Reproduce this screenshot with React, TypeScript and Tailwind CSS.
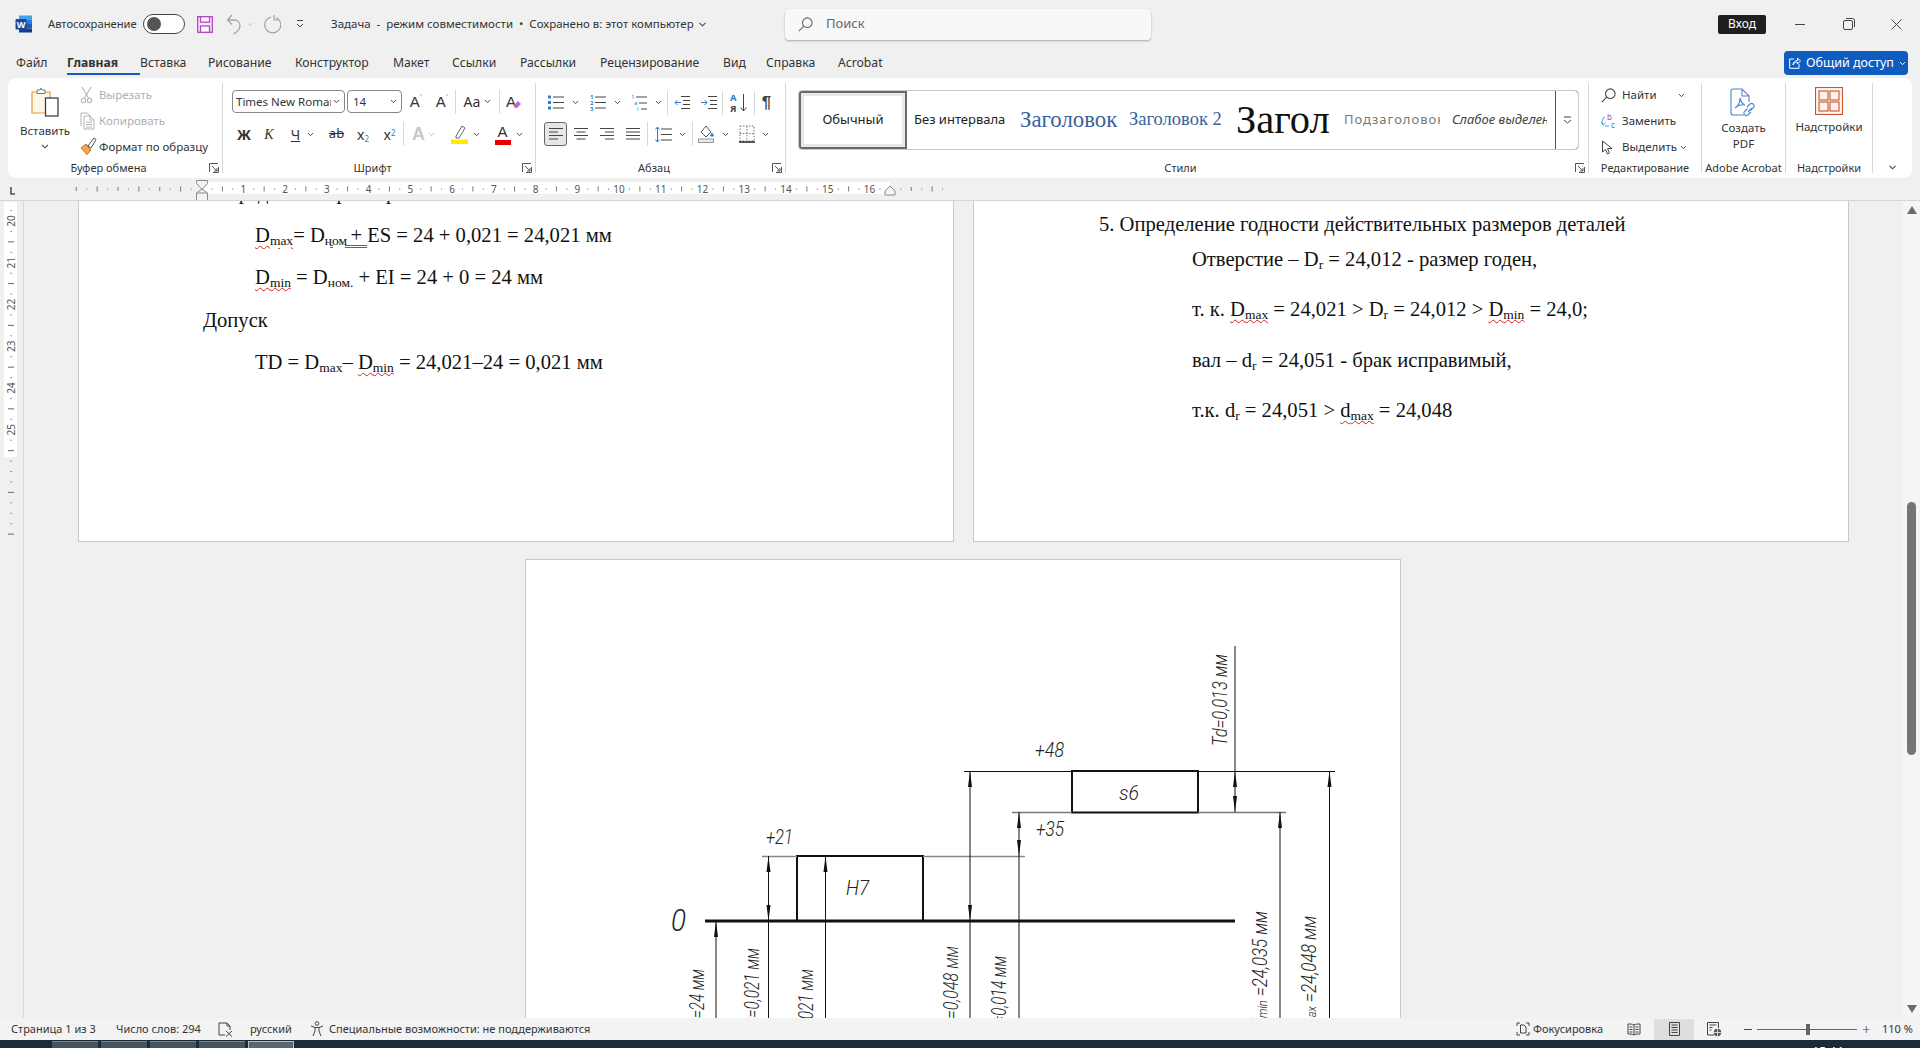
import React from "react";

const Caret = ({ c = "#444", w = 8 }: { c?: string; w?: number }) => (
  <svg width={w} height={5} viewBox="0 0 8 5" fill="none" stroke={c} strokeWidth="1.1"><path d="M1 .8 4 3.8 7 .8" /></svg>
);

const Launcher = () => (
  <svg width="10" height="10" viewBox="0 0 10 10" fill="none" stroke="#555" strokeWidth="1"><path d="M.5 9V.5H9M9.5 4v5.500H4M3 3l5 5M8 5v3H5" /></svg>
);

const WordIcon = () => (
  <svg width="18" height="18" viewBox="0 0 18 18">
    <rect x="4" y="0.5" width="13" height="4.5" fill="#41a5ee" />
    <rect x="4" y="5" width="13" height="4" fill="#2b7cd3" />
    <rect x="4" y="9" width="13" height="4.5" fill="#185abd" />
    <rect x="4" y="13.5" width="13" height="4" fill="#103f91" />
    <rect x="0.5" y="4" width="11" height="10.5" rx="1" fill="#134a9f" />
    <text x="6" y="12.5" textAnchor="middle" fontSize="9" fontWeight="700" fill="#fff">W</text>
  </svg>
);

const SaveIcon = () => (
  <svg width="16" height="17" viewBox="0 0 16 17" fill="none" stroke="#b146c2" strokeWidth="1.3">
    <rect x=".7" y=".7" width="14.6" height="15.6" fill="#f6e9f8" />
    <rect x="3.5" y=".7" width="9" height="5.5" fill="#fff" />
    <rect x="3.5" y="10" width="9" height="6.3" fill="#fff" />
  </svg>
);

const UndoIcon = () => (
  <svg width="16" height="21" viewBox="0 0 16 21" fill="none" stroke="#a3a3a3" strokeWidth="1.3"><path d="M6 1 1.500 6 6 10.500M1.500 6H8c3.500 0 6 2.500 6 6 0 3.500-3 6-6.500 8" /></svg>
);

const RedoIcon = () => (
  <svg width="18" height="20" viewBox="0 0 18 20" fill="none" stroke="#a3a3a3" strokeWidth="1.2"><path d="M11 1v5h5M13 3.500A8 8 0 1 1 8 3" /></svg>
);

const SearchIcon = ({ s = 15, c = "#666" }: { s?: number; c?: string }) => (
  <svg width={s} height={s} viewBox="0 0 15 15" fill="none" stroke={c} strokeWidth="1.1"><circle cx="9.300" cy="5.700" r="4.800" /><path d="M5.800 9.200.8 14.200" /></svg>
);

const Paste = () => (
  <svg width="28" height="30" viewBox="0 0 28 30" fill="none">
    <path d="M1 5h18v21H1z" fill="#fdf6ea" stroke="#e29a3c" strokeWidth="1.2" />
    <path d="M6 5V3h3l1-2 1 2h3v3.500H6z" fill="#fff" stroke="#777" strokeWidth="1" />
    <rect x="14.500" y="11" width="12.500" height="18" fill="#fff" stroke="#333" strokeWidth="1.2" />
  </svg>
);

const Scissors = () => (
  <svg width="13" height="18" viewBox="0 0 13 18" fill="none" stroke="#b5b5b5" strokeWidth="1.1"><path d="M2 1l6.500 11M11 1 4.500 12" /><circle cx="3.500" cy="14.500" r="2.200" /><circle cx="9.500" cy="14.500" r="2.200" /></svg>
);

const CopyI = () => (
  <svg width="15" height="18" viewBox="0 0 15 18" fill="none" stroke="#b5b5b5" strokeWidth="1"><path d="M1 14V1h6l3 3" /><path d="M4 4h6l4 4v9H4zM10 4v4h4M6 10h6M6 12.500h6M6 15h6" /></svg>
);

const Brush = () => (
  <svg width="17" height="18" viewBox="0 0 17 18" fill="none">
    <path d="M1 11l5-4 5 6-4 4.500z" fill="#f4a64a" stroke="#d2691e" />
    <path d="M6 7l3 4" stroke="#777" />
    <path d="M8 9l6-8 2 1.500-5 8.500z" fill="#fff" stroke="#555" />
  </svg>
);

const BigA = ({ c = "#333" }: { c?: string }) => (
  <span className="font-['Liberation_Sans',sans-serif] text-[15px] leading-none" style={{ color: c }}>A</span>
);

const Lines = ({ kind }: { kind: "l" | "c" | "r" | "j" }) => {
  const d = {
    l: "M1 1.500h14M1 5h9M1 8.500h14M1 12h9",
    c: "M1 1.500h14M3.500 5h9M1 8.500h14M3.500 12h9",
    r: "M1 1.500h14M6 5h9M1 8.500h14M6 12h9",
    j: "M1 1.500h14M1 5h14M1 8.500h14M1 12h14",
  }[kind];
  return <svg width="16" height="14" viewBox="0 0 16 14" fill="none" stroke="#444" strokeWidth="1"><path d={d} /></svg>;
};

const ListI = ({ kind }: { kind: "b" | "n" | "m" }) => (
  <svg width="17" height="17" viewBox="0 0 17 17" fill="none" strokeWidth="1">
    {kind === "b" && <g fill="#2b7cd3"><rect x="0" y="1.500" width="3" height="3" /><rect x="0" y="7" width="3" height="3" /><rect x="0" y="12.500" width="3" height="3" /></g>}
    {kind === "n" && <g fill="#2b7cd3" fontSize="6" fontWeight="700"><text x="0" y="5">1</text><text x="0" y="11">2</text><text x="0" y="17">3</text></g>}
    {kind === "m" && <g fill="#2b7cd3" fontSize="6"><text x="0" y="5">1</text><text x="3" y="11">a</text><text x="6" y="17">i</text></g>}
    <path d={kind === "m" ? "M5 3h11M8 9h8M10 15h6" : "M5 3h11M5 8.500h11M5 14h11"} stroke="#444" />
  </svg>
);

const Indent = ({ dir }: { dir: "l" | "r" }) => (
  <svg width="16" height="15" viewBox="0 0 16 15" fill="none" strokeWidth="1">
    <path d="M7 1.500h9M9 5.500h7M9 9.500h7M7 13.500h9" stroke="#444" />
    <path d={dir === "l" ? "M7 7.500H1M3.500 5 1 7.500 3.500 10" : "M0 7.500h6M3.500 5 6 7.500 3.500 10"} stroke="#2b7cd3" />
  </svg>
);

const Sort = () => (
  <svg width="18" height="20" viewBox="0 0 18 20" fill="none">
    <text x="0" y="8" fontSize="9.500" fontWeight="700" fill="#2b7cd3">А</text>
    <text x="0" y="18.500" fontSize="9.500" fontWeight="700" fill="#444">Я</text>
    <path d="M13.500 1v17M10.500 14.500l3 3.500 3-3.500" stroke="#444" />
  </svg>
);

const Spacing = () => (
  <svg width="17" height="17" viewBox="0 0 17 17" fill="none" strokeWidth="1">
    <path d="M6 3h11M6 8.500h11M6 14h11" stroke="#444" />
    <path d="M2.500 1v15M.5 3.500l2-2.500 2 2.500M.5 13.500l2 2.500 2-2.500" stroke="#2b7cd3" />
  </svg>
);

const Shade = () => (
  <svg width="17" height="18" viewBox="0 0 17 18" fill="none" strokeWidth="1">
    <path d="M8 1 3 7l5 5 5-5z" stroke="#555" />
    <path d="M14 8l1.500 3h-3z" fill="#2b7cd3" stroke="#2b7cd3" />
    <rect x=".5" y="14" width="15" height="3.500" fill="#e9e9e9" stroke="#999" />
  </svg>
);

const Borders = () => (
  <svg width="16" height="18" viewBox="0 0 16 18" fill="none" stroke="#777" strokeWidth="1" strokeDasharray="1.500 1.500">
    <path d="M1 1h14v15H1zM8 1v15M1 8.500h14" />
    <path d="M0 17h16" stroke="#222" strokeWidth="1.500" strokeDasharray="none" />
  </svg>
);

const Sep = ({ h = "h-[24px]" }: { h?: string }) => <div className={`w-px bg-[#d8d8d8] shrink-0 ${h}`} />;

const Cell = ({ w, children, gap = "gap-[7px]" }: { w: string; children: React.ReactNode; gap?: string }) => (
  <div className={`flex items-center justify-center shrink-0 h-full ${w} ${gap}`}>{children}</div>
);

const Group = ({ w, label, launcher, children }: { w: string; label: string; launcher?: boolean; children: React.ReactNode }) => (
  <div className={`flex flex-col shrink-0 h-full border-r border-[#d8d8d8] ${w}`}>
    <div className="flex-1 min-h-0">{children}</div>
    <div className={`flex items-center h-[14px] pt-[3px] text-[11px] leading-none text-[#333] ${launcher ? "pr-[3px]" : ""}`}>
      <span className="flex-1 text-center whitespace-nowrap">{label}</span>
      {launcher && <Launcher />}
    </div>
  </div>
);

const Wavy = ({ children }: { children: React.ReactNode }) => (
  <span className="underline decoration-wavy decoration-[#d02020] decoration-1 underline-offset-[3px]">{children}</span>
);

const Sb = ({ children }: { children: React.ReactNode }) => <sub className="text-[13.500px]">{children}</sub>;

const Line = ({ pl, mt, children }: { pl: string; mt?: string; children: React.ReactNode }) => (
  <p className={`whitespace-nowrap ${pl} ${mt ?? ""}`}>{children}</p>
);

const HRuler = () => {
  const nums = Array.from({ length: 17 }, (_, i) => i);
  const x = (i: number) => 201.5 + i * 41.75;
  const ticks: React.ReactNode[] = [];
  for (let i = -3; i < 18; i++) {
    for (const q of [0.25, 0.5, 0.75]) {
      const px = x(i + q);
      if (px < 75 || px > 945) continue;
      ticks.push(q === 0.5
        ? <path key={`${i}${q}`} d={`M${px} 6.500v5`} stroke="#777" />
        : <path key={`${i}${q}`} d={`M${px} 8.500v1.200`} stroke="#777" />);
    }
    if (i < 0) ticks.push(<path key={`n${i}`} d={`M${x(i)} 7v4`} stroke="#777" />);
    if (i > 16 && x(i) < 945) ticks.push(<path key={`m${i}`} d={`M${x(i)} 7v4`} stroke="#777" />);
  }
  return (
    <svg width="1920" height="21" viewBox="0 0 1920 21" className="block" fill="none">
      <rect x="204" y="2" width="686" height="12" fill="#fff" />
      {ticks}
      {nums.slice(1).map((n) => (
        <text key={n} x={x(n)} y="12.500" textAnchor="middle" fontSize="10" fill="#555" stroke="none">{n}</text>
      ))}
      <path d="M11 7v7h4" stroke="#555" strokeWidth="1.600" />
      <path d="M196.500.5h11v3l-5.500 6-5.500-6zM196.500 20.500h11V13h-11zM196.500 13l5.500-4 5.500 4" stroke="#8a8a8a" fill="#f4f4f4" />
      <path d="M885 15v-4l5-5 5 5v4z" stroke="#8a8a8a" fill="#f4f4f4" />
    </svg>
  );
};

const VRuler = () => {
  const y = (n: number) => 20 + (n - 20) * 41.75;
  const out: React.ReactNode[] = [];
  for (let n = 19; n < 28; n++) {
    for (const q of [0.25, 0.5, 0.75]) {
      const py = y(n + q);
      if (py < 4 || py > 340) continue;
      out.push(q === 0.5
        ? <path key={`${n}${q}`} d={`M8 ${py}h6`} stroke="#666" />
        : <path key={`${n}${q}`} d={`M10.500 ${py}h1.300`} stroke="#666" />);
    }
    if (n > 25) out.push(<path key={`t${n}`} d={`M10.500 ${y(n)}h1.300`} stroke="#666" />);
  }
  return (
    <svg width="23" height="340" viewBox="0 0 23 340" fill="none" className="block shrink-0">
      <rect x="4" y="1" width="13" height="255" fill="#fff" />
      {out}
      {[20, 21, 22, 23, 24, 25].map((n) => (
        <text key={n} transform={`translate(14.500 ${y(n)}) rotate(-90)`} textAnchor="middle" fontSize="10" fill="#555">{n}</text>
      ))}
    </svg>
  );
};

const Arr = ({ x, y, up }: { x: number; y: number; up: boolean }) => (
  <path d={up ? `M${x} ${y}l-2 16h4z` : `M${x} ${y}l-2-16h4z`} fill="#111" stroke="none" />
);

const VT = ({ x, y, len, children }: { x: number; y: number; len: number; children: React.ReactNode }) => (
  <text transform={`translate(${x} ${y}) rotate(-90)`} textAnchor="end" fontSize="20" textLength={len} lengthAdjust="spacingAndGlyphs">{children}</text>
);

const Drawing = () => (
  <svg width="874" height="500" viewBox="526 559 874 500" fill="none" className="block font-['Roboto',sans-serif] italic font-light">
    <g stroke="#111" strokeWidth="1">
      <path d="M705 920H1235" strokeWidth="3" />
      <path d="M797 920V855H923V920" strokeWidth="2" />
      <path d="M1072 811.500V770H1198V811.500H1072Z" strokeWidth="2" />
      <path d="M762 855.500H797M923 855.500H1025" stroke="#888" strokeWidth="1.500" />
      <path d="M964 770.500H1072M1198 770.500H1335" strokeWidth="1.200" />
      <path d="M1012 811.500H1072M1198 811.500H1286" stroke="#777" strokeWidth="1.500" />
      <path d="M716 920V1060M768.500 855V1060M825.500 855V1060M970 770V1060M1019 811V1060M1235 645V811M1280 811V1060M1329.500 770V1060" />
    </g>
    <Arr x={716} y={920} up />
    <Arr x={768.500} y={855} up />
    <Arr x={768.500} y={920} up={false} />
    <Arr x={825.500} y={855} up />
    <Arr x={970} y={770} up />
    <Arr x={970} y={920} up={false} />
    <Arr x={1019} y={811} up />
    <Arr x={1019} y={855} up={false} />
    <Arr x={1235} y={770} up />
    <Arr x={1235} y={811} up={false} />
    <Arr x={1280} y={811} up />
    <Arr x={1329.500} y={770} up />
    <g fill="#222" fontSize="20">
      <text x="1035" y="756" textLength="29" lengthAdjust="spacingAndGlyphs">+48</text>
      <text x="1036" y="835" textLength="28" lengthAdjust="spacingAndGlyphs">+35</text>
      <text x="766" y="843" textLength="27" lengthAdjust="spacingAndGlyphs">+21</text>
      <text x="846" y="894" textLength="23" lengthAdjust="spacingAndGlyphs">H7</text>
      <text x="1119" y="799" textLength="20" lengthAdjust="spacingAndGlyphs">s6</text>
      <text x="671" y="930" fontSize="32" textLength="15" lengthAdjust="spacingAndGlyphs">0</text>
      <VT x={1227} y={653} len={92}>Td=0,013 мм</VT>
      <VT x={704} y={968} len={83}>Dmin=24 мм</VT>
      <VT x={759} y={947} len={87}>ES=0,021 мм</VT>
      <VT x={813} y={968} len={116}>Dmax=24,021 мм</VT>
      <VT x={958} y={945} len={89}>es=0,048 мм</VT>
      <VT x={1006} y={955} len={102}>Nmin=0,014 мм</VT>
      <VT x={1267} y={910} len={116}>d<tspan fontSize="13">min</tspan> =24,035 мм</VT>
      <VT x={1316} y={915} len={120}>d<tspan fontSize="13">max</tspan> =24,048 мм</VT>
    </g>
  </svg>
);

export default function App() {
  return (
    <div className="w-[1920px] h-[1048px] overflow-hidden flex flex-col bg-[#f0f0f0] text-[#333] font-['Noto_Sans',sans-serif]">
      {/* Title bar */}
      <header className="h-[46px] shrink-0 flex items-center text-[11.500px] pl-[15px] pt-[2px]">
        <WordIcon />
        <span className="ml-[15px] w-[90px] text-[11.200px] whitespace-nowrap">Автосохранение</span>
        <div className="ml-[5px] w-[42px] h-[20px] rounded-full border border-[#444] bg-white flex items-center pl-[3px]">
          <div className="w-[14px] h-[14px] rounded-full bg-[#555]" />
        </div>
        <div className="ml-[12px]"><SaveIcon /></div>
        <div className="ml-[13px] flex items-center gap-[5px]"><UndoIcon /><Caret c="#b5b5b5" w={6} /></div>
        <div className="ml-[10px]"><RedoIcon /></div>
        <svg className="ml-[14px]" width="10" height="10" viewBox="0 0 10 10" fill="none" stroke="#444" strokeWidth="1"><path d="M2 1.500h6M2 5l3 3 3-3" /></svg>
        <span className="ml-[26px] w-[366px] whitespace-pre">Задача  -  режим совместимости  •  Сохранено в: этот компьютер</span>
        <Caret c="#444" w={11} />
        <div className="ml-[77px] w-[366px] h-[31px] bg-[#f8f8f8] rounded-[4px] shadow-[0_1px_2px_rgba(0,0,0,0.3)] flex items-center pl-[13px] text-[#666] text-[13px]">
          <SearchIcon />
          <span className="ml-[13px]">Поиск</span>
        </div>
        <div className="ml-[567px] w-[48px] h-[19px] rounded-[2px] bg-[#1f1f1f] text-white text-[12px] flex items-center justify-center">Вход</div>
        <div className="ml-[29px] w-[10px] h-px bg-[#444]" />
        <svg className="ml-[38px]" width="12" height="12" viewBox="0 0 12 12" fill="none" stroke="#444" strokeWidth="1"><rect x=".5" y="2.500" width="9" height="9" rx="1.500" /><path d="M3 .5h6.500a2 2 0 0 1 2 2V9" /></svg>
        <svg className="ml-[36px]" width="11" height="11" viewBox="0 0 11 11" fill="none" stroke="#444" strokeWidth="1"><path d="M.5.5l10 10M10.500.5l-10 10" /></svg>
      </header>

      {/* Tabs */}
      <nav className="h-[32px] shrink-0 flex items-start text-[12.200px] leading-[18px] pl-[16px] pt-[8px]">
        <span className="w-[51px]">Файл</span>
        <span className="w-[73px] font-bold border-b-2 border-[#185abd] h-[21px] mr-0">Главная</span>
        <span className="w-[68px]">Вставка</span>
        <span className="w-[87px]">Рисование</span>
        <span className="w-[98px]">Конструктор</span>
        <span className="w-[59px]">Макет</span>
        <span className="w-[68px]">Ссылки</span>
        <span className="w-[80px]">Рассылки</span>
        <span className="w-[123px]">Рецензирование</span>
        <span className="w-[43px]">Вид</span>
        <span className="w-[72px]">Справка</span>
        <span className="w-[60px]">Acrobat</span>
        <div className="ml-[886px] -mt-[3px] w-[124px] h-[24px] rounded-[4px] bg-[#0f5cc0] text-white flex items-center pl-[5px] gap-[5px] text-[12.500px]">
          <svg width="12" height="12" viewBox="0 0 12 12" fill="none" stroke="#fff" strokeWidth="1"><path d="M5 2H.7v9.300H10V7M4 8c0-3 2-4.500 4.500-4.500V1l3 3-3 3V5C6.500 5 5 6 4 8z" /></svg>
          <span className="whitespace-nowrap">Общий доступ</span>
          <Caret c="#fff" w={7} />
        </div>
      </nav>

      {/* Ribbon */}
      <section className="mx-[8px] h-[100px] shrink-0 bg-white rounded-[8px] py-[5px] flex text-[11.500px]">
        <Group w="w-[215px]" label="Буфер обмена" launcher>
          <div className="flex h-full">
            <div className="ml-[12px] w-[50px] flex flex-col items-center pt-[4px]">
              <Paste />
              <span className="mt-[5px]">Вставить</span>
              <div className="mt-[5px]"><Caret /></div>
            </div>
            <div className="ml-[10px] flex flex-col -mt-px">
              <div className="h-[26px] flex items-center text-[#b0b0b0]"><div className="w-[19px]"><Scissors /></div>Вырезать</div>
              <div className="h-[26px] flex items-center text-[#b0b0b0]"><div className="w-[19px]"><CopyI /></div>Копировать</div>
              <div className="h-[26px] flex items-center whitespace-nowrap"><div className="w-[19px]"><Brush /></div>Формат по образцу</div>
            </div>
          </div>
        </Group>

        <Group w="w-[313px]" label="Шрифт" launcher>
          <div className="pl-[9px] pt-[7px]">
            <div className="flex items-center h-[23px]">
              <div className="w-[113px] h-[23px] border border-[#888] rounded-[4px] flex items-center pl-[3px] pr-[4px] gap-[2px] text-[11.500px]">
                <span className="flex-1 overflow-hidden whitespace-nowrap">Times New Roman</span><Caret w={7} />
              </div>
              <div className="ml-[2px] w-[55px] h-[23px] border border-[#888] rounded-[4px] flex items-center justify-between pl-[5px] pr-[4px]">
                <span>14</span><Caret w={7} />
              </div>
              <Cell w="w-[26px] ml-[1px]"><span className="flex items-start"><BigA /><span className="text-[8px] leading-none text-[#2b7cd3]">˄</span></span></Cell>
              <Cell w="w-[26px]"><span className="flex items-start"><BigA /><span className="text-[8px] leading-none text-[#2b7cd3]">˅</span></span></Cell>
              <Sep />
              <Cell w="w-[43px]" gap="gap-[4px]"><span className="text-[14px]">Aa</span><Caret w={7} /></Cell>
              <Sep />
              <Cell w="w-[28px]">
                <span className="flex items-end"><BigA /><svg width="9" height="9" viewBox="0 0 9 9" className="-ml-[3px]"><path d="M1 5l4-4 3 3-4 4H2z" fill="#c266d6" /></svg></span>
              </Cell>
            </div>
            <div className="flex items-center h-[24px] mt-[9px]">
              <Cell w="w-[24px]"><span className="font-bold text-[14px] text-[#333]">Ж</span></Cell>
              <Cell w="w-[26px]"><span className="italic text-[14px] font-['Liberation_Serif',serif]">К</span></Cell>
              <Cell w="w-[41px]"><span className="underline text-[14px]">Ч</span><Caret w={7} /></Cell>
              <Cell w="w-[27px]"><span className="line-through text-[13px]">ab</span></Cell>
              <Cell w="w-[26px]"><span className="text-[14px]">x<sub className="text-[#2b7cd3] text-[8px]">2</sub></span></Cell>
              <Cell w="w-[27px]"><span className="text-[14px]">x<sup className="text-[#2b7cd3] text-[8px]">2</sup></span></Cell>
              <Sep />
              <Cell w="w-[39px]" gap="gap-[3px]"><span className="font-bold text-[18px] leading-none text-[#c8c8c8] font-['Liberation_Sans',sans-serif]">A</span><Caret c="#c0c0c0" w={7} /></Cell>
              <Cell w="w-[44px]" gap="gap-[5px]">
                <svg width="17" height="20" viewBox="0 0 17 20" fill="none"><path d="M5 12 11 2l3 2-6 10H5z" stroke="#666" /><rect y="15.500" width="17" height="4.500" fill="#ffeb00" /></svg>
                <Caret w={7} />
              </Cell>
              <Cell w="w-[43px]" gap="gap-[5px]">
                <span className="flex flex-col items-center leading-none"><BigA /><span className="block w-[16px] h-[5px] bg-[#e60000] mt-[1px]" /></span>
                <Caret w={7} />
              </Cell>
            </div>
          </div>
        </Group>

        <Group w="w-[250px]" label="Абзац" launcher>
          <div className="pt-[8px]">
            <div className="flex items-center h-[23px] pl-[6px]">
              <Cell w="w-[42px]"><ListI kind="b" /><Caret w={7} /></Cell>
              <Cell w="w-[42px]"><ListI kind="n" /><Caret w={7} /></Cell>
              <Cell w="w-[41px]"><ListI kind="m" /><Caret w={7} /></Cell>
              <Sep />
              <Cell w="w-[27px]"><Indent dir="l" /></Cell>
              <Cell w="w-[27px]"><Indent dir="r" /></Cell>
              <Sep />
              <Cell w="w-[31px]"><Sort /></Cell>
              <Sep />
              <Cell w="w-[23px]"><span className="font-['Liberation_Sans',sans-serif] text-[17px] font-bold text-[#444]">¶</span></Cell>
            </div>
            <div className="flex items-center h-[24px] mt-[8px] pl-[8px]">
              <div className="w-[23px] h-[24px] rounded-[3px] border border-[#666] bg-[#e6e6e6] flex items-center justify-center"><Lines kind="l" /></div>
              <Cell w="w-[27px]"><Lines kind="c" /></Cell>
              <Cell w="w-[25px]"><Lines kind="r" /></Cell>
              <Cell w="w-[28px]"><Lines kind="j" /></Cell>
              <Sep />
              <Cell w="w-[44px]"><Spacing /><Caret w={7} /></Cell>
              <Sep />
              <Cell w="w-[41px]"><Shade /><Caret w={7} /></Cell>
              <Cell w="w-[40px]"><Borders /><Caret w={7} /></Cell>
            </div>
          </div>
        </Group>

        <Group w="w-[803px]" label="Стили" launcher>
          <div className="pt-[7px] pl-[12px]">
            <div className="w-[781px] h-[60px] border border-[#c8c8c8] rounded-[4px] flex items-center overflow-hidden">
              <div className="w-[108px] h-[58px] border-2 border-[#6a6a6a] outline-none flex items-center justify-center shrink-0 bg-white text-[13px] text-[#222] shadow-[inset_0_0_0_3px_#e8e8e8]">Обычный</div>
              <span className="ml-[7px] w-[106px] shrink-0 text-[13px] text-[#222] whitespace-nowrap">Без интервала</span>
              <span className="w-[109px] shrink-0 text-[22.800px] text-[#3a6298] font-['Liberation_Serif',serif] whitespace-nowrap">Заголовок</span>
              <span className="w-[107px] shrink-0 text-[18.500px] text-[#3a6298] font-['Liberation_Serif',serif] whitespace-nowrap">Заголовок 2</span>
              <span className="w-[108px] shrink-0 text-[40.500px] leading-none text-[#111] font-['Liberation_Serif',serif] whitespace-nowrap">Загол</span>
              <span className="w-[96px] mr-[12px] shrink-0 overflow-hidden text-[13px] text-[#777] tracking-[1px] whitespace-nowrap">Подзаголовок</span>
              <span className="w-[95px] shrink-0 overflow-hidden text-[13px] italic text-[#444] whitespace-nowrap">Слабое выделение</span>
              <div className="ml-[8px] w-[24px] h-[60px] border border-[#555] rounded-r-[4px] flex items-center justify-center shrink-0">
                <svg width="9" height="8" viewBox="0 0 9 8" fill="none" stroke="#444"><path d="M1 1h7M1 4l3.500 3L8 4" /></svg>
              </div>
            </div>
          </div>
        </Group>

        <Group w="w-[113px]" label="Редактирование">
          <div className="flex flex-col pl-[12px] -mt-px">
            <div className="h-[26px] flex items-center"><div className="w-[21px]"><SearchIcon s={15} c="#444" /></div>Найти<div className="ml-[21px]"><Caret w={7} /></div></div>
            <div className="h-[26px] flex items-center">
              <div className="w-[21px]">
                <svg width="16" height="15" viewBox="0 0 16 15" fill="none">
                  <path d="M4 3C1 4 .5 8 2 11M0.500 8l1.500 3 2.500-2M4 12h4" stroke="#2b9cd8" />
                  <text x="6" y="6" fontSize="8" fill="#b146c2">b</text>
                  <text x="10" y="14" fontSize="8" fill="#2b7cd3">c</text>
                </svg>
              </div>Заменить
            </div>
            <div className="h-[26px] flex items-center">
              <div className="w-[21px]"><svg width="12" height="15" viewBox="0 0 12 15" fill="none" stroke="#444"><path d="M1.500 1v11l3-2.500 2 4.500 2-1-2-4.500H11z" /></svg></div>Выделить<div className="ml-[3px]"><Caret w={7} /></div>
            </div>
          </div>
        </Group>

        <Group w="w-[84px]" label="Adobe Acrobat">
          <div className="flex flex-col items-center pt-[5px] leading-[16px]">
            <svg width="27" height="29" viewBox="0 0 27 29" fill="none" stroke="#4a86d0" strokeWidth="1.100">
              <path d="M14 27H3a2 2 0 0 1-2-2V3a2 2 0 0 1 2-2h9l7 7v6M12 1v7h7" />
              <path d="M5 20c3-2 5-6 5-10 1 4 2 6 5 7-3-.5-7 0-10 3z" />
              <path d="M17 19l3-3a2.500 2.500 0 0 1 3.500 3.500l-3 3M21 24l-3 3a2.500 2.500 0 0 1-3.500-3.500l3-3M18 24l4-4" />
            </svg>
            <span className="mt-[3px]">Создать</span>
            <span>PDF</span>
          </div>
        </Group>

        <Group w="w-[87px]" label="Надстройки">
          <div className="flex flex-col items-center pt-[4px]">
            <svg width="28" height="28" viewBox="0 0 28 28" fill="#fdf3ee" stroke="#c5562a" strokeWidth="1.100">
              <rect x=".5" y=".5" width="27" height="27" />
              <rect x="4" y="4" width="9" height="9" />
              <rect x="15" y="4" width="9" height="9" />
              <rect x="4" y="15" width="9" height="9" />
              <rect x="15" y="15" width="9" height="9" />
            </svg>
            <span className="mt-[3px]">Надстройки</span>
          </div>
        </Group>

        <div className="flex-1 flex items-end justify-center pb-[3px]"><Caret c="#444" w={11} /></div>
      </section>

      {/* Ruler */}
      <div className="mt-[2px] h-[21px] shrink-0 border-b border-[#d4d4d4] overflow-hidden"><HRuler /></div>

      {/* Document */}
      <main className="flex-1 min-h-0 flex">
        <div className="w-[24px] shrink-0 border-r border-[#d8d8d8]"><VRuler /></div>
        <div className="flex-1 min-w-0 overflow-hidden font-['Liberation_Serif',serif] text-[20.600px] text-[#111] pl-[54px]">
          <div className="flex gap-[19px]">
            <article className="w-[876px] h-[341px] bg-white border-x border-b border-[#c8c8c8] overflow-hidden leading-[42.500px]">
              <div className="-mt-[30px]">
                <Line pl="pl-[145px]">Предельные размеры</Line>
                <Line pl="pl-[176px]"><Wavy>D<Sb>max</Sb></Wavy>= D<span className="underline decoration-double decoration-[#2b6cc4] decoration-1 underline-offset-[3px]"><Sb>ном </Sb>+ </span>ES = 24 + 0,021 = 24,021 мм</Line>
                <Line pl="pl-[176px]"><Wavy>D<Sb>min</Sb></Wavy> = D<Sb>ном.</Sb> + EI = 24 + 0 = 24 мм</Line>
                <Line pl="pl-[124px]">Допуск</Line>
                <Line pl="pl-[176px]">TD = D<Sb>max</Sb>– <Wavy>D<Sb>min</Sb></Wavy> = 24,021–24 = 0,021 мм</Line>
              </div>
            </article>
            <article className="w-[876px] h-[341px] bg-white border-x border-b border-[#c8c8c8] overflow-hidden leading-[30px]">
              <Line pl="pl-[125px]" mt="mt-[8px]">5. Определение годности действительных размеров деталей</Line>
              <Line pl="pl-[218px]" mt="mt-[5px]">Отверстие – D<Sb>r</Sb> = 24,012 - размер годен,</Line>
              <Line pl="pl-[218px]" mt="mt-[20px]">т. к. <Wavy>D<Sb>max</Sb></Wavy> = 24,021 &gt; D<Sb>r</Sb> = 24,012 &gt; <Wavy>D<Sb>min</Sb></Wavy> = 24,0;</Line>
              <Line pl="pl-[218px]" mt="mt-[21px]">вал – d<Sb>r</Sb> = 24,051 - брак исправимый,</Line>
              <Line pl="pl-[218px]" mt="mt-[20px]">т.к. d<Sb>r</Sb> = 24,051 &gt; <Wavy>d<Sb>max</Sb></Wavy> = 24,048</Line>
            </article>
          </div>
          <article className="mt-[17px] ml-[447px] w-[876px] h-[600px] bg-white border border-[#c8c8c8]"><Drawing /></article>
        </div>
        <aside className="w-[17px] shrink-0 flex flex-col items-center pt-[5px] bg-[#f5f5f5]">
          <svg width="10" height="8" viewBox="0 0 10 8"><path d="M5 0l5 8H0z" fill="#6a6a6a" /></svg>
          <div className="mt-[288px] w-[9px] h-[253px] bg-[#757575] rounded-full" />
          <div className="flex-1" />
          <svg width="10" height="8" viewBox="0 0 10 8" className="mb-[5px]"><path d="M5 8l5-8H0z" fill="#6a6a6a" /></svg>
        </aside>
      </main>

      {/* Status bar */}
      <footer className="h-[22px] shrink-0 bg-[#f3f3f3] flex items-center text-[11px] text-[#333] pl-[11px]">
        <span className="w-[105px] whitespace-nowrap">Страница 1 из 3</span>
        <span className="w-[102px] whitespace-nowrap">Число слов: 294</span>
        <svg width="15" height="15" viewBox="0 0 15 15" fill="none" stroke="#444"><path d="M9 1H1v12h6M9 1l3 3v4M9 1v3h3M8 9l6 5.500M14 9l-6 5.500" /></svg>
        <span className="ml-[17px] w-[60px] whitespace-nowrap">русский</span>
        <svg width="16" height="16" viewBox="0 0 16 16" fill="none" stroke="#444"><circle cx="7" cy="2.500" r="1.800" /><path d="M1 5l4 1.500h4L13 5M5 6.500V10l-2 5M9 6.500V10l2 5" /></svg>
        <span className="ml-[3px] whitespace-nowrap">Специальные возможности: не поддерживаются</span>
        <div className="flex-1" />
        <svg width="14" height="14" viewBox="0 0 14 14" fill="none" stroke="#444"><path d="M1 4V1h3M10 1h3v3M13 10v3h-3M4 13H1v-3M4.500 3h3.500l2 2v6h-5.500z" /></svg>
        <span className="ml-[3px] w-[94px] whitespace-nowrap">Фокусировка</span>
        <svg width="14" height="13" viewBox="0 0 14 13" fill="none" stroke="#444"><path d="M7 2C5.500 1 3 1 1 1v10c2 0 4.500 0 6 1 1.500-1 4-1 6-1V1c-2 0-4.500 0-6 1zM7 2v10M2.500 4h3M2.500 6.500h3M2.500 9h3M8.500 4h3M8.500 6.500h3M8.500 9h3" /></svg>
        <div className="ml-[13px] w-[40px] h-[21px] bg-[#dedede] flex items-center justify-center">
          <svg width="11" height="14" viewBox="0 0 11 14" fill="none" stroke="#444"><path d="M.5.5h10v13H.5zM2.500 3h6M2.500 5.500h6M2.500 8h6M2.500 10.500h6" /></svg>
        </div>
        <svg className="ml-[13px]" width="15" height="15" viewBox="0 0 15 15" fill="none" stroke="#444"><path d="M7 13H.5V.5h11V6M2.500 3h7M2.500 5.500h3M2.500 8h2" /><circle cx="10.500" cy="10.500" r="3.700" fill="#555" stroke="none" /><path d="M7 10.500h7M10.500 7v7" stroke="#f3f3f3" strokeWidth=".8" /></svg>
        <div className="ml-[22px] w-[8px] h-px bg-[#444]" />
        <div className="ml-[5px] w-[100px] h-[13px] flex items-center">
          <div className="w-[49px] h-px bg-[#666]" />
          <div className="w-[4px] h-[11px] bg-[#666]" />
          <div className="flex-1 h-px bg-[#666]" />
        </div>
        <span className="ml-[5px] text-[15px] leading-none w-[17px] text-[#444] font-light">+</span>
        <span className="ml-[3px] w-[38px] whitespace-nowrap">110 %</span>
      </footer>

      {/* Taskbar */}
      <div className="h-[8px] shrink-0 bg-[#1b2b38] flex items-start pl-[52px] pt-px gap-[3px] overflow-hidden">
        <div className="w-[46px] h-[7px] bg-[#46525c] border-t border-[#7b858c]" />
        <div className="w-[46px] h-[7px] bg-[#46525c] border-t border-[#7b858c]" />
        <div className="w-[46px] h-[7px] bg-[#46525c] border-t border-[#7b858c]" />
        <div className="w-[46px] h-[7px] bg-[#46525c] border-t border-[#7b858c]" />
        <div className="w-[46px] h-[7px] bg-[#5a656e] border border-b-0 border-[#b6bcc0]" />
        <div className="flex-1" />
        <span className="mr-[77px] mt-[4px] text-[12px] leading-[14px] text-white">15:44</span>
      </div>
    </div>
  );
}
